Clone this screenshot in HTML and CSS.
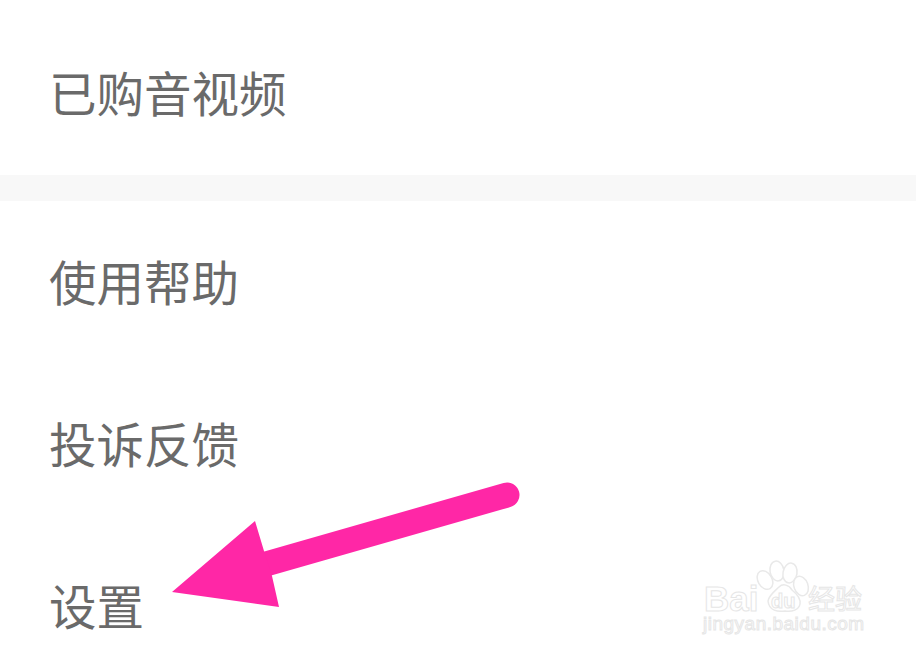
FILE: index.html
```html
<!DOCTYPE html>
<html lang="zh">
<head>
<meta charset="utf-8">
<title>设置</title>
<link rel="stylesheet" href="styles.css">
</head>
<body>
<div class="screen">
  <div class="group first"><div class="row">已购音视频</div></div>
  <div class="divider"></div>
  <div class="group">
    <div class="row">使用帮助</div>
    <div class="row">投诉反馈</div>
    <div class="row">设置</div>
  </div>
  <svg class="arrow" viewBox="0 0 916 660" width="916" height="660" aria-hidden="true">
    <path class="arrow-shaft" d="M266 564 L507 495"/>
    <polygon class="arrow-head" points="172,592 255,521 264,551 272,576 279,607"/>
  </svg>
  <svg class="mark" viewBox="0 0 916 660" width="916" height="660" aria-hidden="true">
    <g class="paw">
      <ellipse cx="765" cy="580" rx="7" ry="10" transform="rotate(-30 765 580)"/>
      <ellipse cx="777" cy="571" rx="7" ry="10" transform="rotate(-10 777 571)"/>
      <ellipse cx="790" cy="573" rx="7" ry="10" transform="rotate(10 790 573)"/>
      <ellipse cx="801" cy="586" rx="7" ry="10" transform="rotate(-20 801 586)"/>
      <path d="M768 601 C769 595 775 591 779 587 C783 583 789 585 792 590 C797 594 801 598 800 604 C799 610 792 612 785 611 C778 612 769 611 768 601Z"/>
    </g>
    <text class="wm wm-bai" x="704" y="611">Bai</text>
    <text class="wm wm-du" x="771" y="608">du</text>
    <text class="wm wm-cn" x="808" y="609">经验</text>
    <text class="wm wm-url" x="703" y="630">jingyan.baidu.com</text>
  </svg>
</div>
</body>
</html>
```
FILE: styles.css
```css
html, body {
  margin: 0;
  padding: 0;
  background: #fff;
}
.screen {
  position: relative;
  width: 916px;
  height: 660px;
  overflow: hidden;
  background: #fff;
  font-family: "Noto Sans CJK SC", "Liberation Sans", sans-serif;
}
.group {
  display: flex;
  flex-direction: column;
  gap: 68px;
  padding: 33px 0 0 49px;
}
.group.first {
  height: 175px;
  padding: 45px 0 0 49px;
  box-sizing: border-box;
  justify-content: flex-start;
}
.row {
  height: 94px;
  line-height: 94px;
  font-size: 47.5px;
  color: #6a6a6a;
  white-space: nowrap;
}
.divider {
  height: 26px;
  background: #f8f8f8;
}
.arrow, .mark {
  position: absolute;
  left: 0;
  top: 0;
}
.arrow-shaft {
  fill: none;
  stroke: #ff27a6;
  stroke-width: 25;
  stroke-linecap: round;
}
.arrow-head {
  fill: #ff27a6;
}
.paw ellipse, .paw path {
  fill: #fff;
  stroke: #e9e9e9;
  stroke-width: 1.5;
}
.wm {
  fill: #fff;
  stroke: #e6e6e6;
  stroke-width: 1;
  font-family: "Liberation Sans", "Noto Sans CJK SC", sans-serif;
}
.wm-bai { font-size: 35px; font-weight: 700; }
.wm-du { font-size: 20px; font-weight: 700; }
.wm-cn { font-size: 27px; font-family: "Noto Sans CJK SC", sans-serif; }
.wm-url { font-size: 19px; letter-spacing: 0.5px; }
```
